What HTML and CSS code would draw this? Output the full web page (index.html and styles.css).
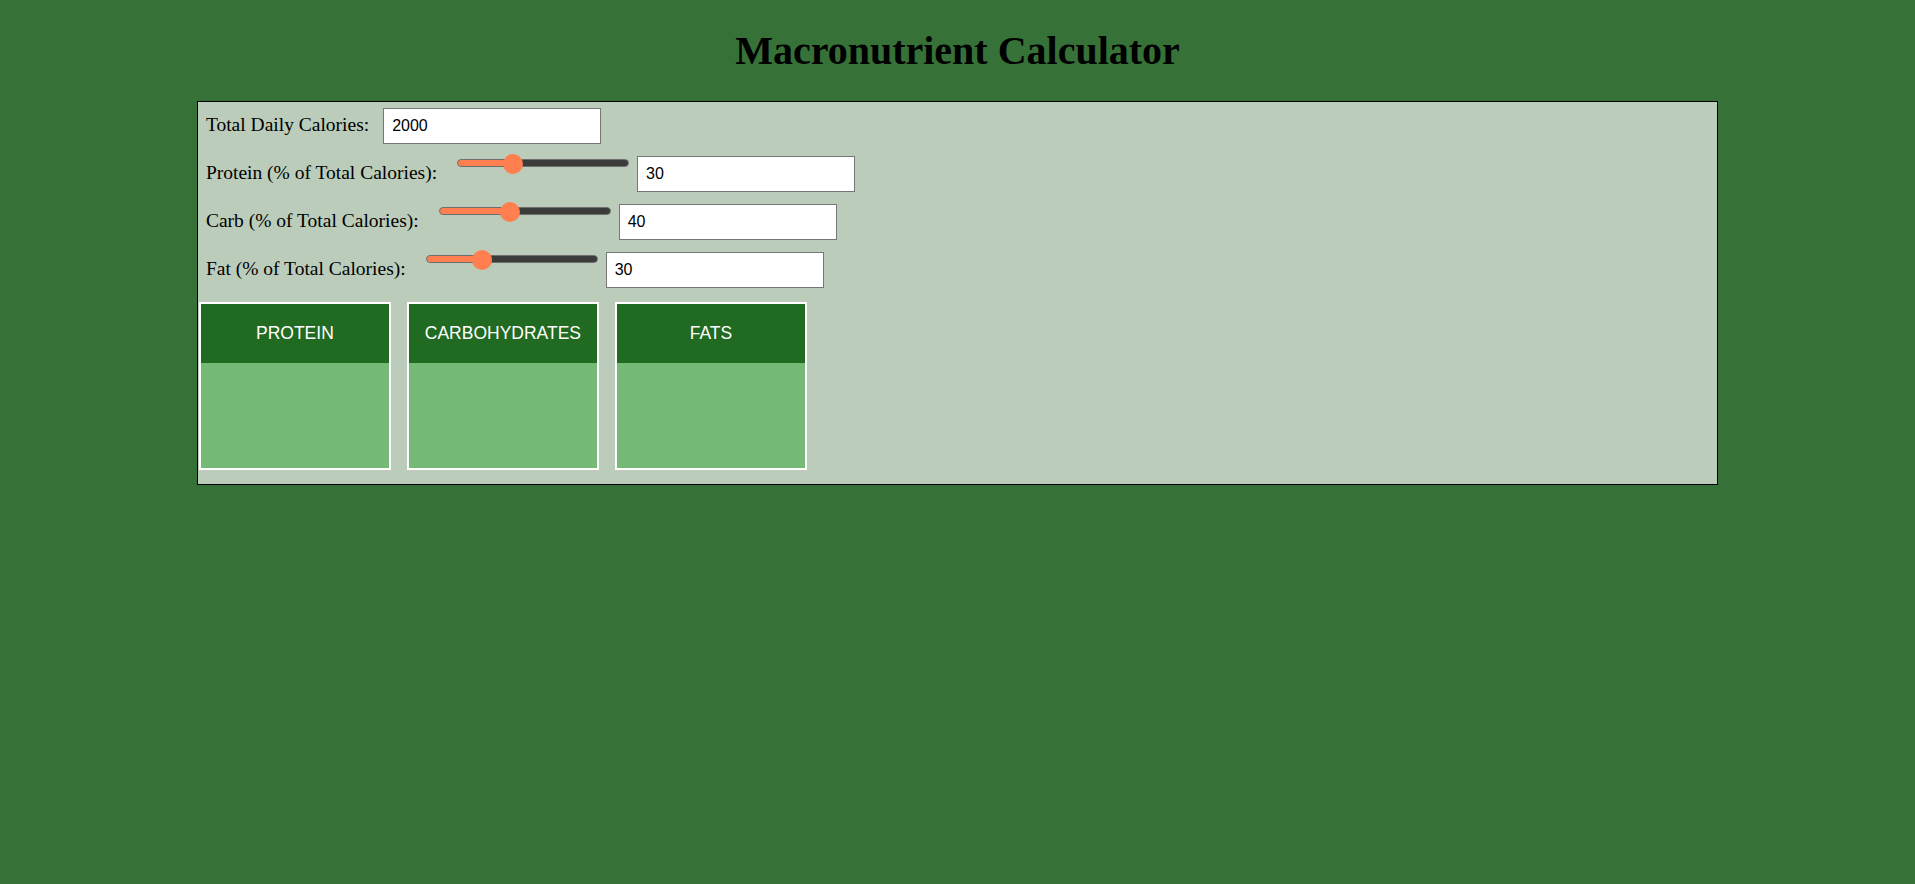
FILE: index.html
```html
<!DOCTYPE html>
<html lang="en">
<head>
<meta charset="utf-8">
<title>Macronutrient Calculator</title>
<link rel="stylesheet" href="styles.css">
</head>
<body>
<h1 class="title">Macronutrient Calculator</h1>
<div class="calc">
  <div class="row">
    <label class="lbl" for="cal">Total Daily Calories:</label>
    <input class="num" id="cal" type="text" value="2000">
  </div>
  <div class="row">
    <label class="lbl" for="p">Protein (% of Total Calories):</label>
    <input class="slider" type="range" min="0" max="100" value="30" style="--v:0.3">
    <input class="num" id="p" type="text" value="30">
  </div>
  <div class="row">
    <label class="lbl" for="c">Carb (% of Total Calories):</label>
    <input class="slider" type="range" min="0" max="100" value="40" style="--v:0.4">
    <input class="num" id="c" type="text" value="40">
  </div>
  <div class="row">
    <label class="lbl" for="f">Fat (% of Total Calories):</label>
    <input class="slider" type="range" min="0" max="100" value="30" style="--v:0.3">
    <input class="num" id="f" type="text" value="30">
  </div>
  <div class="cards">
    <div class="card">
      <div class="card-head">PROTEIN</div>
      <div class="card-body"></div>
    </div>
    <div class="card">
      <div class="card-head">CARBOHYDRATES</div>
      <div class="card-body"></div>
    </div>
    <div class="card">
      <div class="card-head">FATS</div>
      <div class="card-body"></div>
    </div>
  </div>
</div>
</body>
</html>
```
FILE: styles.css
```css
body {
  margin: 8px;
  background: #367237;
  font-family: "Liberation Serif", "Times New Roman", serif;
  font-size: 16px;
  color: #000;
}
.title {
  text-align: center;
  font-size: 40px;
  margin: 19px 0 27px;
}
.calc {
  width: 80%;
  margin: 0 auto;
  border: 1px solid #000;
  background: #bbcdba;
  padding: 6px 0 14px;
}
.row {
  margin: 0 0 12px 8px;
}
.lbl {
  font-size: 19.5px;
  margin-right: 10px;
}
.num {
  width: 200px;
  padding: 8px;
  font-family: "Liberation Sans", Arial, sans-serif;
  font-size: 16px;
  border: 1px solid #767676;
  background: #fff;
  color: #000;
}
.slider {
  -webkit-appearance: none;
  appearance: none;
  width: 172px;
  height: 20px;
  margin: -3px 4px 0 6px;
  background: transparent;
  vertical-align: top;
}
.slider::-webkit-slider-runnable-track {
  height: 8px;
  border: 1px solid #6e6e6e;
  border-radius: 5px;
  background: linear-gradient(to right, #ff7f50 calc(10px + (100% - 20px) * var(--v)), #3b3b3b calc(10px + (100% - 20px) * var(--v)));
}
.slider::-webkit-slider-thumb {
  -webkit-appearance: none;
  appearance: none;
  width: 20px;
  height: 20px;
  margin-top: -6px;
  border-radius: 50%;
  background: #ff7f50;
  border: none;
}
.cards {
  display: flex;
  gap: 16px;
  margin: 14px 0 0 1px;
}
.card {
  width: 188px;
  border: 2px solid #fff;
  background: #74b976;
}
.card-head {
  background: #216a21;
  color: #fff;
  text-align: center;
  padding: 19px 0;
  font-family: "Liberation Sans", Arial, sans-serif;
  font-size: 17.5px;
}
.card-body {
  height: 105px;
}
```
